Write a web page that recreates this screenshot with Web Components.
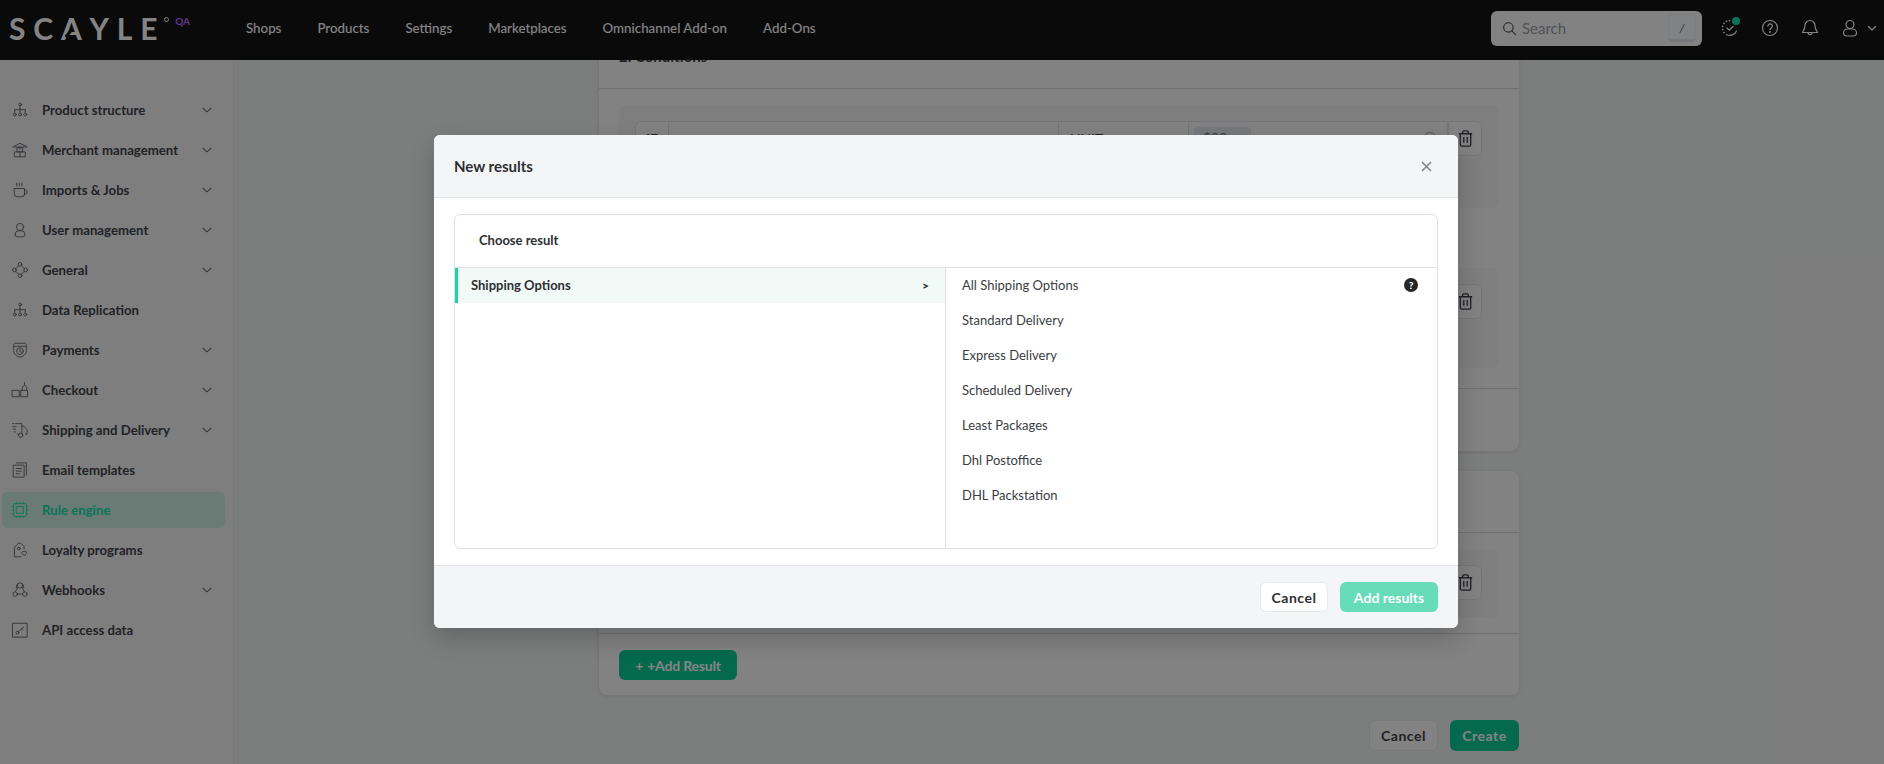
<!DOCTYPE html>
<html lang="en"><head><meta charset="utf-8"><title>Rule engine</title>
<style>
html,body{margin:0;padding:0;height:764px;overflow:hidden;background:#eff1ee;font-family:Lato,"Noto Sans",sans-serif;color:#3f3f46}
#app{display:block}
</style></head><body>
<x-app id="app">
  <x-topbar slot="top"></x-topbar>
  <x-sidebar slot="side">
    <x-nav-item icon="structure" caret>Product structure</x-nav-item>
    <x-nav-item icon="merchant" caret>Merchant management</x-nav-item>
    <x-nav-item icon="cup" caret>Imports &amp; Jobs</x-nav-item>
    <x-nav-item icon="user" caret>User management</x-nav-item>
    <x-nav-item icon="general" caret>General</x-nav-item>
    <x-nav-item icon="structure">Data Replication</x-nav-item>
    <x-nav-item icon="payments" caret>Payments</x-nav-item>
    <x-nav-item icon="checkout" caret>Checkout</x-nav-item>
    <x-nav-item icon="truck" caret>Shipping and Delivery</x-nav-item>
    <x-nav-item icon="email">Email templates</x-nav-item>
    <x-nav-item icon="chip" active>Rule engine</x-nav-item>
    <x-nav-item icon="loyalty">Loyalty programs</x-nav-item>
    <x-nav-item icon="webhook" caret>Webhooks</x-nav-item>
    <x-nav-item icon="api">API access data</x-nav-item>
  </x-sidebar>
  <x-form-page slot="main"></x-form-page>
  <x-modal slot="overlay"></x-modal>
</x-app>
<template id="app-t"><style>
:host{display:block;height:764px;position:relative;overflow:hidden}
.body{display:flex;height:704px;overflow:hidden}
.main{flex:1;min-width:0;overflow:hidden}
.dim{position:absolute;inset:0;background:rgba(10,10,11,.5);z-index:5}
.over{position:absolute;inset:0;z-index:6}
</style>
<slot name="top"></slot>
<div class="body"><slot name="side"></slot><div class="main"><slot name="main"></slot></div></div>
<div class="dim"></div><div class="over"><slot name="overlay"></slot></div>
</template>
<script>
const P = {
 structure:'<circle cx="12" cy="4.5" r="1.7"/><path d="M12 6.2V11M5 11.5h14M5 11.5v3.5M12 11v4M19 11.5v3.5"/><circle cx="5" cy="18" r="1.9"/><circle cx="12" cy="18" r="1.9"/><circle cx="19" cy="18" r="1.9"/>',
 merchant:'<path d="M2.5 8 12 3l9.5 5M4 8h16"/><rect x="8.5" y="9" width="7" height="5.5"/><rect x="5" y="14.5" width="14" height="6.5"/><path d="M12 14.5V21M12 9v2"/>',
 cup:'<path d="M4.5 10h13.5v7.5a3.5 3.5 0 0 1-3.5 3.5H8a3.5 3.5 0 0 1-3.5-3.5z"/><path d="M18 12h1a2.7 2.7 0 0 1 0 5.4h-1M7.5 3v3.5M11 3v3.5M14.5 3v3.5"/>',
 user:'<circle cx="12" cy="8" r="4.8"/><path d="M5.5 17.5A4.5 4.5 0 0 1 10 13h4a4.5 4.5 0 0 1 4.5 4.5v.5a3 3 0 0 1-3 3h-7a3 3 0 0 1-3-3z"/>',
 general:'<circle cx="12" cy="4.5" r="2.5"/><circle cx="12" cy="19.5" r="2.5"/><circle cx="4.5" cy="12" r="2.5"/><circle cx="19.5" cy="12" r="2.5"/><path d="M10.2 6.3 6.3 10.2M13.8 6.3l3.9 3.9M6.3 13.8l3.9 3.9M17.7 13.8l-3.9 3.9"/>',
 payments:'<path d="M3.5 5c0-1 .8-2 2-2h13c1.2 0 2 1 2 2v8c0 4.5-4.500 8-8.500 8.500C8 21 3.500 17.500 3.500 13z"/><path d="M3.500 7h17"/><circle cx="12" cy="13.500" r="4.500"/><path d="M12 11v3l2 1"/>',
 checkout:'<rect x="2" y="12.500" width="9" height="8.500"/><rect x="13.500" y="12.500" width="8.500" height="8.500"/><path d="M15 12.500V8l3-2.500 3 2.500v4.500M18 5.500V2"/>',
 truck:'<path d="M6 3.500h8.500V7h3l4 5v5.500h-2M14.500 7v10M2 3.500h2M2 7.500h5M3 11h3M4 14.500h2M8.500 17.500h2"/><circle cx="13" cy="19" r="2.800"/>',
 email:'<rect x="3.500" y="5.500" width="14" height="16"/><path d="M7 2.500h13.500v16M7 10h7M7 13.500h7M7 17h4"/>',
 chip:'<rect x="3.500" y="3.500" width="17" height="17" rx="1.500"/><rect x="7.500" y="7.500" width="9" height="9"/><path d="M7.500 1.800v1.700M12 1.800v1.700M16.500 1.800v1.700M7.500 20.500v1.700M12 20.500v1.700M16.500 20.500v1.700M1.800 7.500h1.700M1.800 12h1.700M1.800 16.500h1.700M20.500 7.500h1.700M20.500 12h1.700M20.500 16.500h1.700"/>',
 loyalty:'<path d="M13 21H4.500V8.500L10 3h3l4.500 4.500v3"/><circle cx="10.500" cy="10" r="1.800"/><path d="M17.500 19.500l-3-3a1.900 1.900 0 0 1 3-2.200 1.900 1.900 0 0 1 3 2.200z"/>',
 webhook:'<circle cx="12" cy="6" r="3.500"/><circle cx="5.500" cy="17.500" r="3"/><circle cx="18.500" cy="17.500" r="3"/><path d="M9 8.500 6 14M15 8.500l2.500 5.500M8.500 17.500h7M9 3.500A6 6 0 0 0 7 9M15 3.500a6 6 0 0 1 2 5.500"/>',
 api:'<rect x="2.500" y="3" width="19" height="18.500"/><circle cx="8.500" cy="15.500" r="2"/><path d="m10 14 7-6M14 10.500l1.500 1.500"/>'
};
function svg(n,size,sw,color){return `<svg width="${size}" height="${size}" viewBox="0 0 24 24" fill="none" stroke="${color||'currentColor'}" stroke-width="${sw}" stroke-linecap="round" stroke-linejoin="round">${P[n]}</svg>`}
class Base extends HTMLElement{
  shell(html){const r=this.attachShadow({mode:'open'});r.innerHTML=html;return r}
}
customElements.define('x-app',class extends Base{constructor(){super();const r=this.attachShadow({mode:'open'});r.appendChild(document.getElementById('app-t').content.cloneNode(true))}});
customElements.define('x-topbar',class extends Base{constructor(){super();this.shell(`<style>
:host{display:flex;align-items:center;height:56px;padding-bottom:4px;background:#0a0a0b;color:#fff;position:relative;z-index:2;font-family:Lato,sans-serif}
.logo{width:246px;flex:none;display:flex;align-items:flex-start;padding-left:9px;box-sizing:border-box;height:56px}
.word{font-size:30px;font-weight:700;letter-spacing:7.8px;line-height:30px;margin-top:13px;color:#fff;margin-right:-4px}
.A{position:relative;display:inline-block}
.A::after{content:"";position:absolute;left:3px;top:19px;width:9px;height:2.5px;background:#0a0a0b;transform:rotate(-50deg)}
.ring{width:3px;height:3px;border:1.200px solid #fff;border-radius:50%;margin:17px 0 0 3px;flex:none}
.qa{font-size:10px;font-weight:700;color:#b266ff;margin:15px 0 0 6px;line-height:12px}
nav{display:flex;gap:36px;font-size:13.3px;font-weight:500;flex:1}
.search{width:211px;height:35px;box-sizing:border-box;background:#fafafa;border-radius:6px;display:flex;align-items:center;padding:0 6px 0 11px;color:#9a9aa2;font-size:15px;gap:5px;margin:0 8px 0 0}
.search span{flex:1}
kbd{width:28px;height:28px;border:1px solid #f1f1f4;border-bottom:3px solid #e5e6ea;box-sizing:border-box;border-radius:4px;font:italic 12px Lato,sans-serif;color:#555;display:flex;align-items:center;justify-content:center;background:#f9fafb}
.icons{display:flex;align-items:center;color:#fff;padding-right:7px}
.ic{width:40px;display:flex;justify-content:center;position:relative}
.dot{position:absolute;width:8px;height:8px;border-radius:50%;background:#0ae0a0;left:22px;top:-2px}
.car{margin-left:-3px}
</style>
<div class="logo"><span class="word">SC<span class="A">A</span>YLE</span><span class="ring"></span><span class="qa">QA</span></div>
<nav><span>Shops</span><span>Products</span><span>Settings</span><span>Marketplaces</span><span>Omnichannel Add-on</span><span>Add-Ons</span></nav>
<div class="search"><svg width="15" height="15" viewBox="0 0 16 16" fill="none" stroke="#555" stroke-width="1.300"><circle cx="6.800" cy="6.800" r="5"/><path d="m10.500 10.500 4 4" stroke-linecap="round"/></svg><span>Search</span><kbd>/</kbd></div>
<div class="icons">
<div class="ic"><svg width="18" height="18" viewBox="0 0 18 18" fill="none" stroke="#fff" stroke-width="1.200" stroke-linecap="round"><path d="M15.500 12A7.500 7.500 0 0 1 5.500 15.700"/><path d="M3 13.500h.01M1.700 10.500h.01M1.700 7.300h.01M3 4.300h.01M5.500 2.300h.01M8.500 1.500h.01" stroke-width="1.700"/><path d="m6 9 2.200 2.200L12 7.500"/></svg><i class="dot"></i></div>
<div class="ic"><svg width="18" height="18" viewBox="0 0 18 18" fill="none" stroke="#fff" stroke-width="1.200"><circle cx="9" cy="9" r="7.500"/><path d="M6.900 7a2.200 2.200 0 1 1 3.300 1.900c-.8.500-1.200 1-1.200 1.800" stroke-linecap="round"/><circle cx="9" cy="13" r=".4"/></svg></div>
<div class="ic"><svg width="18" height="18" viewBox="0 0 18 18" fill="none" stroke="#fff" stroke-width="1.200" stroke-linejoin="round"><path d="M9 1.500a5 5 0 0 0-5 5c0 4-2 6-2.500 7h15c-.5-1-2.500-3-2.500-7a5 5 0 0 0-5-5zM7 13.500a2 2.200 0 0 0 4 0"/></svg></div>
<div class="ic"><svg width="18" height="18" viewBox="0 0 18 18" fill="none" stroke="#fff" stroke-width="1.200"><circle cx="9" cy="5.500" r="4"/><path d="M2.500 14a4 4 0 0 1 4-4h5a4 4 0 0 1 4 4 3 3 0 0 1-3 3h-7a3 3 0 0 1-3-3z"/></svg></div>
<svg class="car" width="10" height="10" viewBox="0 0 10 10" fill="none" stroke="#fff" stroke-width="1.200" stroke-linecap="round" stroke-linejoin="round"><path d="m1.500 3.500 3.500 3.500 3.500-3.500"/></svg>
</div>`)}});
customElements.define('x-sidebar',class extends Base{constructor(){super();this.shell(`<style>
:host{display:flex;flex-direction:column;gap:4px;width:233px;flex:none;box-sizing:content-box;padding-top:32px;border-right:1px solid #e4e6e3;background:#f0f2ef}
</style><slot></slot>`)}});
customElements.define('x-nav-item',class extends Base{constructor(){super();const caret=this.hasAttribute('caret'),ic=this.getAttribute('icon');this.shell(`<style>
:host{display:flex;align-items:center;height:36px;margin:0 8px 0 2px;padding:0 0 0 9px;border-radius:5px;font-size:13.2px;font-weight:700;color:#3a3a40;gap:13px;font-family:Lato,sans-serif}
:host([active]){background:#cbecdf;color:#0ae0a0}
svg.i{flex:none;color:#55565c}
:host([active]) svg.i{color:#0ae0a0}
span{flex:1}
svg.c{margin-right:13px;flex:none}
</style>${svg(ic,18,1.15).replace('<svg','<svg class="i"')}<span><slot></slot></span>${caret?'<svg class="c" width="10" height="10" viewBox="0 0 10 10" fill="none" stroke="#6a6b70" stroke-width="1.100" stroke-linecap="round" stroke-linejoin="round"><path d="m1 3.200 4 3.600 4-3.600"/></svg>':''}`)}});
const trash='<svg width="19" height="19" viewBox="0 0 20 20" fill="none" stroke="#3a3a40" stroke-width="1.400" stroke-linejoin="round"><path d="M3 5h14M7 5V3.500A1.500 1.500 0 0 1 8.500 2h3A1.500 1.500 0 0 1 13 3.500V5M4.500 5v11.500A1.500 1.500 0 0 0 6 18h8a1.500 1.500 0 0 0 1.500-1.500V5M8.200 8.500v6M11.800 8.500v6"/></svg>';
customElements.define('x-rule-row',class extends Base{constructor(){super();this.shell(`<style>
:host{display:flex;height:35px;font-size:14px;color:#3a3a40;font-family:Lato,sans-serif}
.row{flex:1;display:flex;border:1px solid #dfe1e6;border-radius:6px 0 0 6px;background:#fafafa;border-right:0}
.c{display:flex;align-items:center;box-sizing:border-box;border-right:1px solid #dfe1e6}
.a{width:33px;justify-content:center;font-weight:700}
.b{width:390px}
.u{width:130px;padding-left:11px}
.v{flex:1;padding-left:5px;justify-content:space-between;padding-right:10px}
.chip{background:#e5e7eb;border-radius:4px;padding:2px 9px;width:39px;height:20px;color:#6b6b72}
.clr{width:12px;height:12px;border:1px solid #9ca3af;border-radius:50%}
.t{width:34px;box-sizing:border-box;border:1px solid #dfe1e6;border-radius:0 6px 6px 0;display:flex;align-items:center;justify-content:center;background:#fafafa}
</style><div class="row"><div class="c a">IF</div><div class="c b"></div><div class="c u">UNIT</div><div class="c v"><span class="chip">$99</span><span class="clr"></span></div></div><div class="t">${trash}</div>`)}});
customElements.define('x-form-page',class extends Base{constructor(){super();this.shell(`<style>
:host{display:flex;flex-direction:column;align-items:center;margin-top:-32px;font-family:Lato,sans-serif;color:#3a3a40}
.card{width:920px;background:#fafafa;border-radius:8px;box-shadow:0 1px 4px rgba(0,0,0,.12);margin-bottom:20px;box-sizing:border-box}
.head{height:56px;padding:0 0 4px 20px;display:flex;align-items:center;font-size:15px;font-weight:700;border-bottom:1px solid #d3d5db;box-sizing:content-box}
.body{padding:16px 21px 0 20px;box-sizing:border-box}
.group{background:#f2f3f3;border-radius:6px;padding:16px;box-sizing:border-box}
.g1{height:103px;margin-bottom:60px}.g2{height:100px}.g3{height:68px}
.s1{height:299px}.s3{height:100px}
.foot{border-top:1px solid #d3d5db;height:62px}
.foot2{border-top:1px solid #d3d5db;height:62px;padding:16px 20px;box-sizing:border-box}
.actions{width:920px;display:flex;justify-content:flex-end;gap:12px;margin-top:5px}
button{font:700 14px Lato,sans-serif;letter-spacing:.5px;height:31px;border-radius:6px;box-sizing:border-box;padding:0;display:flex;align-items:center;justify-content:center}
.pri{background:#00c98f;color:#fff;border:0}
.sec{background:#fafafa;color:#3a3a40;border:1px solid #e5e7eb}
.add{width:118px;height:30px;gap:4px;letter-spacing:-.2px}
.act{width:69px}
</style>
<div class="card">
 <div class="head">2. Conditions</div>
 <div class="body s1"><div class="group g1"><x-rule-row></x-rule-row></div><div class="group g2"><x-rule-row></x-rule-row></div></div>
 <div class="foot"></div>
</div>
<div class="card">
 <div class="head" style="height:57px">3. Results</div>
 <div class="body s3"><div class="group g3"><x-rule-row></x-rule-row></div></div>
 <div class="foot2"><button class="pri add"><span>+</span><span>+Add Result</span></button></div>
</div>
<div class="actions"><button class="sec act">Cancel</button><button class="pri act">Create</button></div>`)}});
customElements.define('x-modal',class extends Base{constructor(){super();const items=['All Shipping Options','Standard Delivery','Express Delivery','Scheduled Delivery','Least Packages','Dhl Postoffice','DHL Packstation'];this.shell(`<style>
:host{position:absolute;left:434px;top:135px;width:1024px;height:493px;background:#fff;border-radius:6px;box-shadow:0 10px 25px rgba(0,0,0,.2);font-family:Lato,sans-serif;color:#3a3d42;overflow:hidden;box-sizing:border-box;display:flex;flex-direction:column}
header{height:62px;flex:none;background:#f4f5f7;border-bottom:1px solid #e3e4ea;display:flex;align-items:center;justify-content:space-between;padding:0 26px 0 20px;font-size:15px;font-weight:700;color:#2d2f33;box-sizing:content-box}
.wrap{flex:1;padding:16px 20px;min-height:0;display:flex}
.box{flex:1;border:1px solid #dfe0e7;border-radius:6px;display:flex;flex-direction:column;min-height:0}
.ttl{height:50px;padding-bottom:2px;flex:none;border-bottom:1px solid #e0e1e7;display:flex;align-items:center;padding-left:24px;font-size:13px;font-weight:700;color:#2d2f33;box-sizing:content-box}
.cols{flex:1;display:flex;min-height:0}
.l{width:490px;flex:none;border-right:1px solid #e0e1e7}
.r{flex:1;padding:0 19px 0 16px;font-size:13px}
.sel{height:34px;padding:0 16px 1px 13px;background:#f1faf7;border-left:3px solid #1fd3a0;display:flex;align-items:center;justify-content:space-between;font-size:13px;font-weight:700;color:#2d2f33}
.sel b{font-size:12px;font-weight:900}
.it{height:34px;padding-bottom:1px;display:flex;align-items:center;justify-content:space-between}
.q{width:14px;height:14px;border-radius:50%;background:#24262a;color:#fff;font-size:10px;font-weight:900;display:flex;align-items:center;justify-content:center}
footer{height:63px;box-sizing:border-box;flex:none;background:#f4f5f7;border-top:1px solid #e3e4ea;display:flex;justify-content:flex-end;align-items:center;gap:12px;padding:0 20px}
button{font:700 14px Lato,sans-serif;letter-spacing:.5px;height:30px;border-radius:6px;box-sizing:border-box;padding:0}
.cancel{width:68px;background:#fff;border:1px solid #e7e8ee;color:#2d2f33}
.ok{width:98px;background:#66dcb8;border:0;color:#fff;letter-spacing:0}
</style>
<header><span>New results</span><svg width="11" height="11" viewBox="0 0 11 11" fill="none" stroke="#80848b" stroke-width="1.600"><path d="m1 1 9 9M10 1l-9 9"/></svg></header>
<div class="wrap"><div class="box"><div class="ttl">Choose result</div><div class="cols">
<div class="l"><div class="sel"><span>Shipping Options</span><b>&gt;</b></div></div>
<div class="r">${items.map((t,i)=>`<div class="it"><span>${t}</span>${i==0?'<span class="q">?</span>':''}</div>`).join('')}</div>
</div></div></div>
<footer><button class="cancel">Cancel</button><button class="ok">Add results</button></footer>`)}});
</script>
</body></html>
